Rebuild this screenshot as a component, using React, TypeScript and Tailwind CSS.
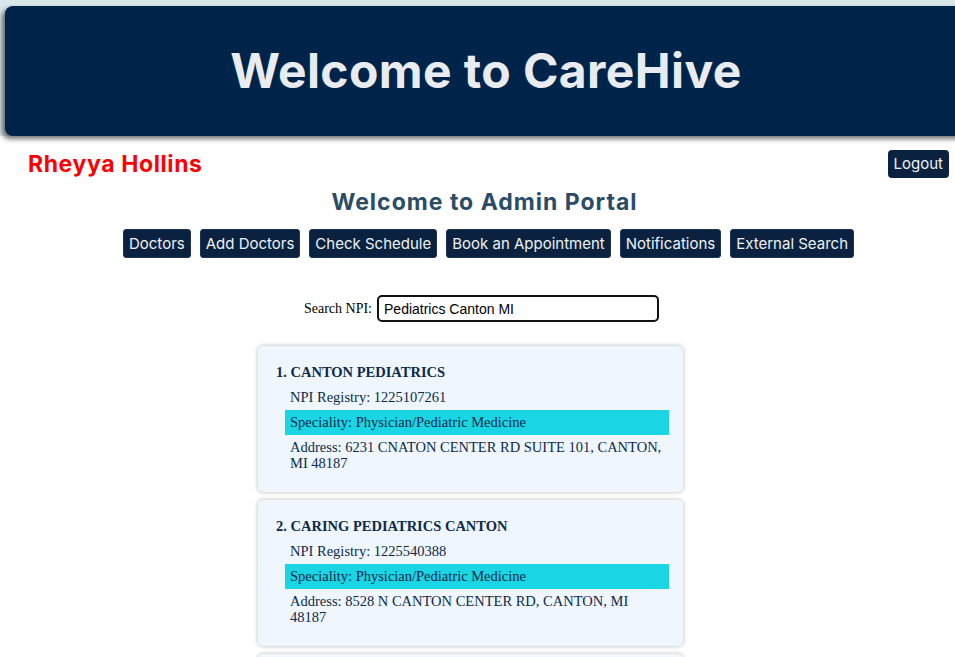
import React, { useState } from 'react';

type Provider = {
  name: string;
  npi: string;
  speciality: string;
  address: string;
};

const providers: Provider[] = [
  {
    name: 'CANTON PEDIATRICS',
    npi: '1225107261',
    speciality: 'Physician/Pediatric Medicine',
    address: '6231 CNATON CENTER RD SUITE 101, CANTON, MI 48187',
  },
  {
    name: 'CARING PEDIATRICS CANTON',
    npi: '1225540388',
    speciality: 'Physician/Pediatric Medicine',
    address: '8528 N CANTON CENTER RD, CANTON, MI 48187',
  },
  {
    name: 'PEDIATRIC ASSOCIATES OF CANTON',
    npi: '1417983305',
    speciality: 'Physician/Pediatric Medicine',
    address: '44650 FORD RD, CANTON, MI 48187',
  },
];

const navItems = ['Doctors', 'Add Doctors', 'Check Schedule', 'Book an Appointment', 'Notifications', 'External Search'];

const App = () => {
  const [query, setQuery] = useState('Pediatrics Canton MI');

  return (
    <div className="min-h-screen w-full overflow-x-hidden bg-white font-['Inter',sans-serif]">
      {/* top strip + header banner */}
      <div className="bg-[#d9e7eb] pt-[6px]">
        <div className="ml-[5px] w-[962px] h-[130px] rounded-[8px] bg-[#002349] shadow-[-3px_3px_5px_rgba(0,0,0,0.55)] flex items-center justify-center">
          <h1 className="text-[#e8ecf1] text-[48px] font-bold tracking-[0.4px]">Welcome to CareHive</h1>
        </div>
      </div>

      {/* user row */}
      <div className="flex items-start justify-between pl-[28px] pr-[6px] pt-[14px]">
        <div className="text-[#ff0000] text-[23px] font-bold leading-[28px] tracking-[0.6px]">Rheyya Hollins</div>
        <button className="bg-[#0a2240] text-[#eef2f6] text-[15px] leading-[18px] px-[6px] py-[5px] rounded-[4px]">
          Logout
        </button>
      </div>

      <h2 className="text-center text-[#2a4c66] text-[23px] font-bold leading-[28px] tracking-[1px] mt-[10px] ml-[14px]">
        Welcome to Admin Portal
      </h2>

      {/* nav buttons */}
      <div className="flex justify-center gap-[9px] mt-[13px] ml-[22px]">
        {navItems.map((item) => (
          <button
            key={item}
            className="bg-[#0a2240] text-[#eef2f6] text-[15px] leading-[17px] px-[5px] py-[5px] rounded-[3px] border border-[#1d3553]"
          >
            {item}
          </button>
        ))}
      </div>

      {/* search */}
      <div className="flex justify-center items-center gap-[5px] mt-[37px] ml-[8px] font-['Liberation_Serif',serif] text-[14px]">
        <label htmlFor="npi" className="text-black">Search NPI:</label>
        <input
          id="npi"
          value={query}
          onChange={(e) => setQuery(e.target.value)}
          className="w-[282px] h-[27px] border-2 border-[#111] rounded-[5px] px-[5px] font-['Liberation_Sans',sans-serif] text-[14px] text-black outline-none"
        />
      </div>

      {/* results */}
      <div className="flex flex-col items-center gap-[8px] mt-[24px] mr-[14px] font-['Liberation_Serif',serif] text-[#0d2a4a]">
        {providers.map((p, i) => (
          <div
            key={p.npi}
            className="w-[425px] bg-[#eff6fe] rounded-[5px] shadow-[0_0_4px_rgba(0,0,0,0.3)] pt-[16px] pb-[17px] pl-[18px] pr-[14px]"
          >
            <h3 className="text-[14.5px] leading-[20px] font-bold">
              {i + 1}. {p.name}
            </h3>
            <ul className="mt-[3px] ml-[9px] text-[14.5px]">
              <li className="px-[5px] py-[4px] leading-[17px]">NPI Registry: {p.npi}</li>
              <li className="px-[5px] py-[4px] leading-[17px] bg-[#1ad5e3]">Speciality: {p.speciality}</li>
              <li className="px-[5px] py-[4px] leading-[16px]">Address: {p.address}</li>
            </ul>
          </div>
        ))}
      </div>
    </div>
  );
};

export default App;
